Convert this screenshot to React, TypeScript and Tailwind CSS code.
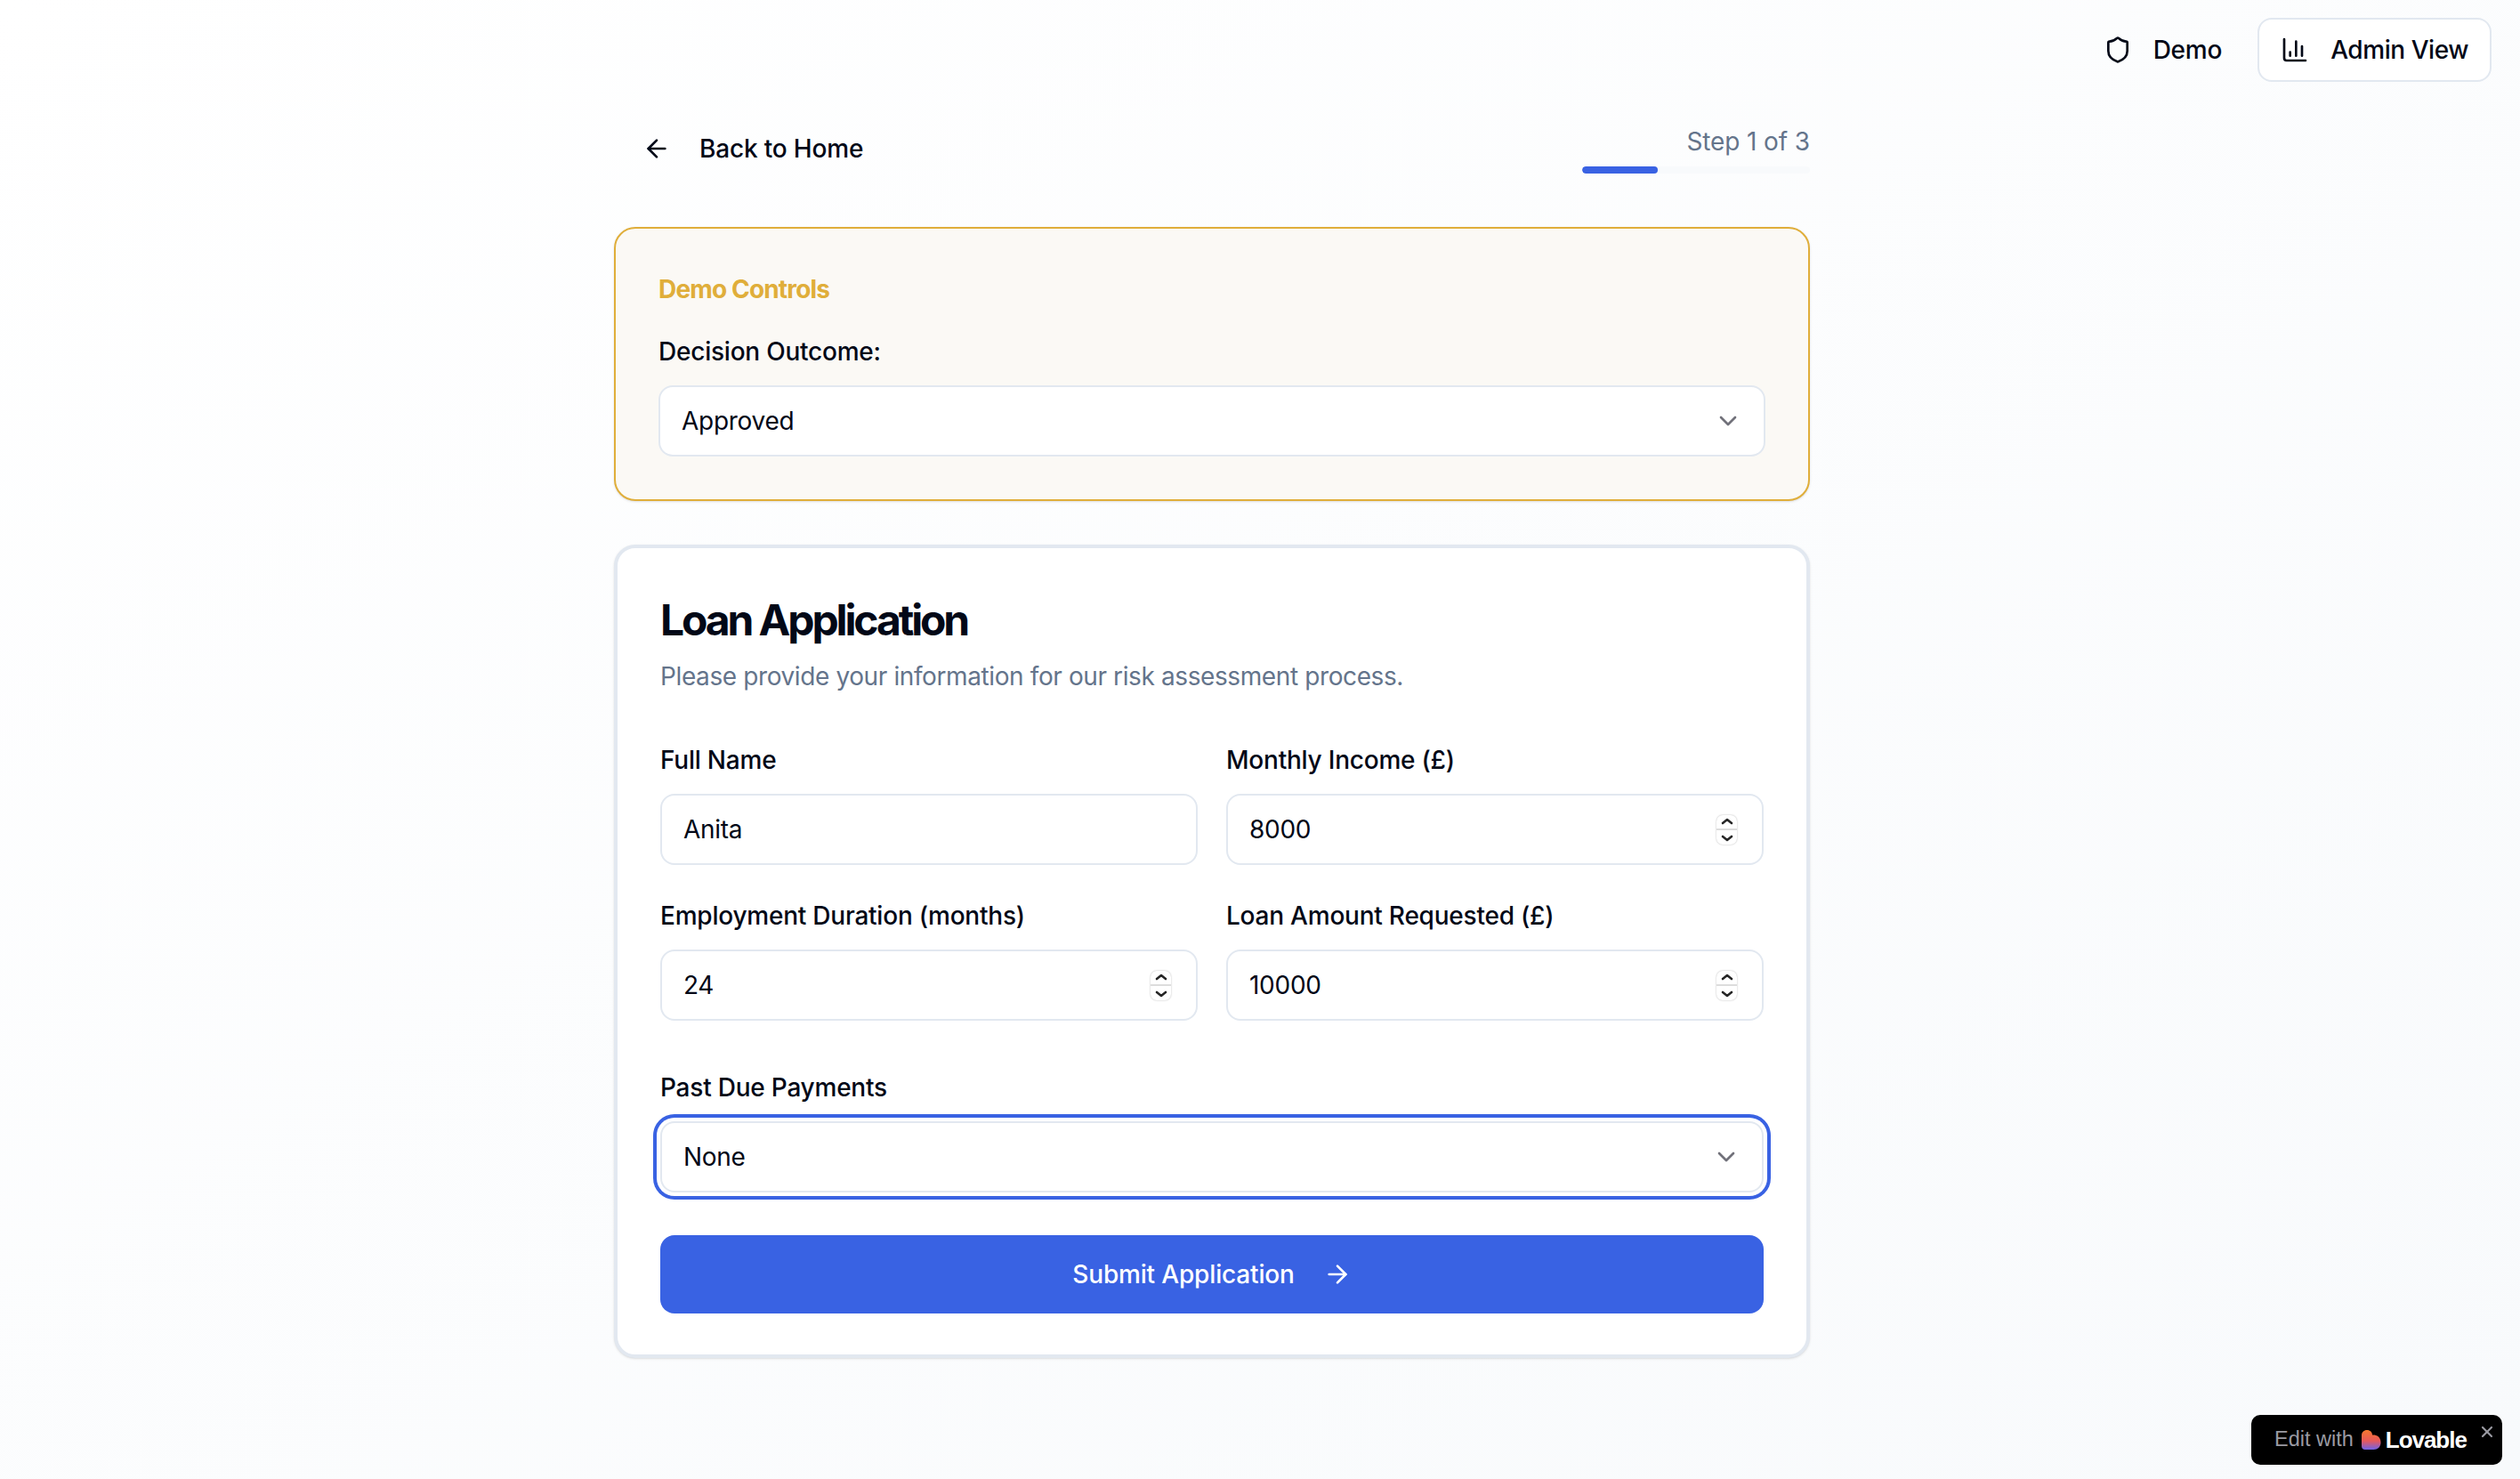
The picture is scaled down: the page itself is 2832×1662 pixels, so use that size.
import { ArrowLeft, ArrowRight, ChartColumn, ChevronDown, Shield, X } from "lucide-react";

function StepperArrow({ down }: { down?: boolean }) {
  return (
    <svg viewBox="0 0 14 10" className="h-[10px] w-[14px] text-[#262626]" fill="none">
      <path
        d={down ? "M2 3l5 4 5-4" : "M2 7l5-4 5 4"}
        stroke="currentColor"
        strokeWidth="2.6"
        strokeLinecap="round"
        strokeLinejoin="round"
      />
    </svg>
  );
}

function Stepper() {
  return (
    <div className="flex h-[33px] w-[23px] flex-col items-center justify-between overflow-hidden rounded-[7px] bg-white py-[2px] shadow-[0_0_2px_rgba(0,0,0,0.3)]">
      <StepperArrow />
      <div className="h-[2px] w-full bg-[#dcdcdc]" />
      <StepperArrow down />
    </div>
  );
}

function Field({ label, value, stepper }: { label: string; value: string; stepper?: boolean }) {
  return (
    <div className="min-w-0">
      <label className="block h-[40px] translate-y-[1px] text-[28px] leading-[40px] font-medium tracking-[-0.008em]">{label}</label>
      <div className="mt-[19px] flex h-[80px] items-center justify-between rounded-[16px] border-2 border-[#e2e8f0] bg-white pr-[28px] pl-[24px]">
        <input
          readOnly
          value={value}
          className="min-w-0 flex-1 bg-transparent text-[28px] tracking-[-0.01em] text-[#020817] outline-none"
        />
        {stepper && <Stepper />}
      </div>
    </div>
  );
}

function SelectBox({ value, focused }: { value: string; focused?: boolean }) {
  return (
    <div
      className={[
        "flex h-[80px] items-center justify-between rounded-[16px] border-2 border-[#e2e8f0] bg-white pr-[24px] pl-[24px] text-[28px] tracking-[-0.01em]",
        focused ? "ring-4 ring-[#3962e3] ring-offset-4" : "",
      ].join(" ")}
    >
      <span>{value}</span>
      <ChevronDown size={32} className="text-[#71717a]" />
    </div>
  );
}

function LovableBadge() {
  return (
    <div className="fixed right-[20px] bottom-[16px] flex h-[56px] w-[282px] items-center rounded-[10px] bg-black pl-[26px] font-['Liberation_Sans',sans-serif]">
      <span className="text-[23.5px] text-[#9a9aa2]">Edit with</span>
      <svg viewBox="0 0 22 22" className="ml-[9px] h-[22px] w-[22px]">
        <defs>
          <linearGradient id="lovable" x1="0" y1="0" x2="0" y2="1">
            <stop offset="0" stopColor="#f4782e" />
            <stop offset="0.55" stopColor="#e8595a" />
            <stop offset="1" stopColor="#6f63e8" />
          </linearGradient>
        </defs>
        <path
          d="M6 0c3.6 0 6 2.4 6 5.6 3.4-.6 9.5 1 9.5 8.4 0 5-3.6 8-8 8H4c-2.4 0-4-1.6-4-4V6c0-3.6 2.6-6 6-6z"
          fill="url(#lovable)"
        />
      </svg>
      <span className="ml-[5px] text-[26px] font-bold tracking-[-0.04em] text-white">Lovable</span>
      <X size={20} strokeWidth={2.6} className="absolute top-[9px] right-[7px] text-[#9a9aa2]" />
    </div>
  );
}

export default function App() {
  return (
    <div className="min-h-screen bg-gradient-to-br from-white to-[#f8fafc] font-['Inter',sans-serif] text-[#020817]">
      <header className="flex h-[92px] items-end justify-end gap-[40px] pr-[32px]">
        <div className="flex h-[72px] items-center gap-[24px] text-[28px] font-medium tracking-[-0.008em]">
          <Shield size={32} />
          <span>Demo</span>
        </div>
        <button className="flex h-[72px] items-center gap-[24px] rounded-[16px] border-2 border-[#e2e8f0] bg-white px-[24px] text-[28px] font-medium tracking-[-0.016em]">
          <ChartColumn size={32} />
          <span>Admin View</span>
        </button>
      </header>

      <main className="ml-[690px] w-[1344px] pb-[136px]">
        <div className="mt-[35px] flex h-[80px] items-center justify-between">
          <a className="flex items-center gap-[32px] px-[32px] text-[28px] font-medium tracking-[-0.006em]">
            <ArrowLeft size={32} />
            <span>Back to Home</span>
          </a>
          <div className="flex w-[256px] flex-col items-end">
            <p className="text-[28px] leading-[40px] tracking-[-0.004em] text-[#64748b]">Step 1 of 3</p>
            <div className="mt-[8px] h-[8px] w-full overflow-hidden rounded-full bg-[#f8fafc]">
              <div className="h-full w-1/3 rounded-full bg-[#3962e3]" />
            </div>
          </div>
        </div>

        <section className="mt-[48px] rounded-[24px] border-2 border-[#e0ae3a] bg-[#fbf9f5] p-[48px] shadow-sm">
          <h2 className="h-[40px] text-[28px] leading-[40px] font-bold tracking-[-0.03em] text-[#e0ae3a]">Demo Controls</h2>
          <label className="mt-[30px] block h-[40px] text-[28px] leading-[40px] font-medium tracking-[-0.008em]">Decision Outcome:</label>
          <div className="mt-[18px]">
            <SelectBox value="Approved" />
          </div>
        </section>

        <section className="mt-[49px] rounded-[24px] border-4 border-[#e2e8f0] bg-white p-[48px] pb-[46px] shadow-sm">
          <h1 className="h-[62px] translate-y-[2px] text-[48px] leading-[62px] font-bold tracking-[-0.065em]">Loan Application</h1>
          <p className="mt-[12px] h-[40px] translate-y-[2px] text-[28px] leading-[40px] tracking-[-0.014em] text-[#64748b]">
            Please provide your information for our risk assessment process.
          </p>

          <div className="mt-[55px] grid grid-cols-2 gap-x-[32px] gap-y-[36px]">
            <Field label="Full Name" value="Anita" />
            <Field label="Monthly Income (£)" value="8000" stepper />
            <Field label="Employment Duration (months)" value="24" stepper />
            <Field label="Loan Amount Requested (£)" value="10000" stepper />
          </div>

          <label className="mt-[55px] block h-[40px] text-[28px] leading-[40px] font-medium tracking-[-0.008em]">Past Due Payments</label>
          <div className="mt-[18px]">
            <SelectBox value="None" focused />
          </div>

          <button className="mt-[48px] flex h-[88px] w-full items-center justify-center gap-[32px] rounded-[16px] bg-[#3962e3] text-[28px] font-medium tracking-[-0.006em] text-white">
            <span>Submit Application</span>
            <ArrowRight size={32} />
          </button>
        </section>
      </main>

      <LovableBadge />
    </div>
  );
}
